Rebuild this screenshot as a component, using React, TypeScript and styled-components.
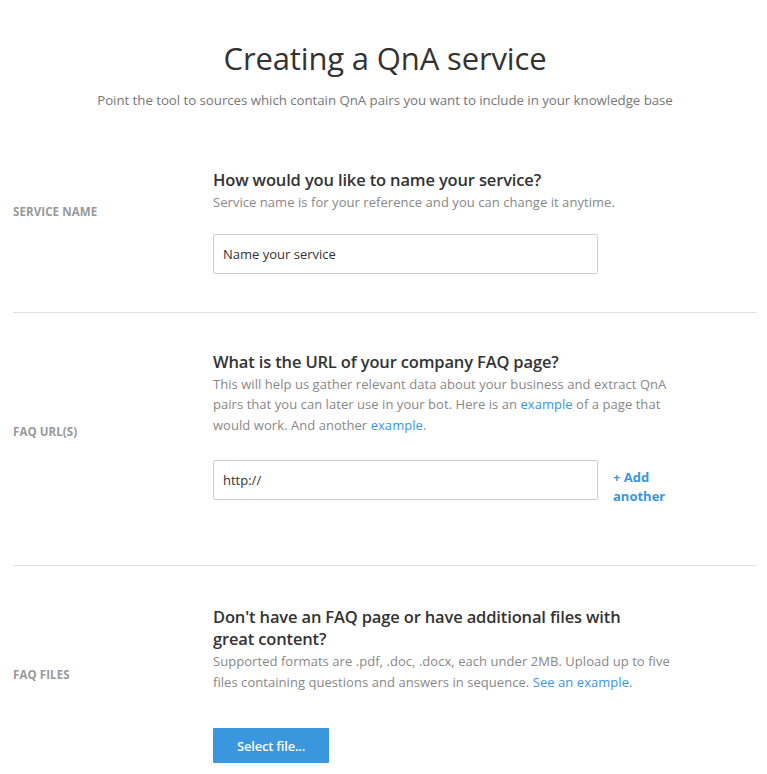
import styled, { createGlobalStyle } from "styled-components";

const GlobalStyle = createGlobalStyle`
  body {
    margin: 0;
    background: #fff;
    font-family: "Open Sans", "Noto Sans", sans-serif;
    color: #333;
  }
`;

const Page = styled.div`
  padding: 0 10px 0 13px;
`;

const Header = styled.header`
  text-align: center;
  padding-top: 38px;
`;

const Title = styled.h1`
  margin: 0;
  font-size: 31px;
  line-height: 40px;
  font-weight: 400;
  color: #333;
  letter-spacing: -0.15px;
`;

const Subtitle = styled.p`
  margin: 13px 0 0;
  font-size: 13.3px;
  line-height: 18px;
  color: #777;
  letter-spacing: -0.05px;
`;

const Section = styled.section<{ $top: number; $bottom: number; $last?: boolean }>`
  display: grid;
  grid-template-columns: 200px 1fr;
  padding: ${(p) => p.$top}px 0 ${(p) => p.$bottom}px;
  border-bottom: ${(p) => (p.$last ? "none" : "1px solid #e0e0e0")};
`;

const Label = styled.div<{ $offset: number }>`
  padding-top: ${(p) => p.$offset}px;
  font-size: 11.5px;
  line-height: 16px;
  font-weight: 700;
  text-transform: uppercase;
  color: #999;
  letter-spacing: 0.1px;
`;

const Content = styled.div`
  max-width: 480px;
`;

const Question = styled.h2`
  margin: 0;
  font-size: 16.5px;
  line-height: 22px;
  font-weight: 600;
  color: #333;
  letter-spacing: -0.15px;
`;

const Help = styled.p`
  margin: 1px 0 0;
  font-size: 13px;
  line-height: 20.5px;
  color: #888;
  letter-spacing: 0.05px;
`;

const Link = styled.a`
  color: #3a96dd;
  text-decoration: none;
  cursor: pointer;
`;

const FieldRow = styled.div<{ $gap: number }>`
  display: flex;
  align-items: flex-start;
  gap: 15px;
  margin-top: ${(p) => p.$gap}px;
`;

const TextInput = styled.input`
  box-sizing: border-box;
  width: 385px;
  height: 40px;
  padding: 0 9px;
  border: 1px solid #cfcfcf;
  border-radius: 2px;
  font-family: inherit;
  font-size: 13px;
  color: #333;
  outline: none;

  &::placeholder {
    color: #333;
  }
`;

const AddLink = styled.a`
  padding-top: 8px;
  font-size: 13px;
  line-height: 19px;
  font-weight: 700;
  color: #3a96dd;
  cursor: pointer;
  width: 60px;
`;

const Button = styled.button`
  margin-top: 36px;
  width: 116px;
  height: 35px;
  border: none;
  border-radius: 1px;
  background: #3a96dd;
  color: #fff;
  font-family: inherit;
  font-size: 13px;
  font-weight: 600;
  letter-spacing: -0.2px;
  cursor: pointer;
`;

export default function App() {
  return (
    <>
      <GlobalStyle />
      <Page>
        <Header>
          <Title>Creating a QnA service</Title>
          <Subtitle>
            Point the tool to sources which contain QnA pairs you want to include in your knowledge base
          </Subtitle>
        </Header>

        <Section $top={60} $bottom={38}>
          <Label $offset={35}>Service name</Label>
          <Content>
            <Question>How would you like to name your service?</Question>
            <Help>Service name is for your reference and you can change it anytime.</Help>
            <FieldRow $gap={21}>
              <TextInput placeholder="Name your service" />
            </FieldRow>
          </Content>
        </Section>

        <Section $top={38} $bottom={59}>
          <Label $offset={73}>FAQ URL(s)</Label>
          <Content>
            <Question>What is the URL of your company FAQ page?</Question>
            <Help>
              This will help us gather relevant data about your business and extract QnA
              <br />
              pairs that you can later use in your bot. Here is an <Link>example</Link> of a page that
              <br />
              would work. And another <Link>example</Link>.
            </Help>
            <FieldRow $gap={25}>
              <TextInput defaultValue="http://" />
              <AddLink>+ Add another</AddLink>
            </FieldRow>
          </Content>
        </Section>

        <Section $top={40} $bottom={10} $last>
          <Label $offset={61}>FAQ files</Label>
          <Content>
            <Question>
              Don't have an FAQ page or have additional files with
              <br />
              great content?
            </Question>
            <Help>
              Supported formats are .pdf, .doc, .docx, each under 2MB. Upload up to five
              <br />
              files containing questions and answers in sequence. <Link>See an example</Link>.
            </Help>
            <Button>Select file...</Button>
          </Content>
        </Section>
      </Page>
    </>
  );
}
